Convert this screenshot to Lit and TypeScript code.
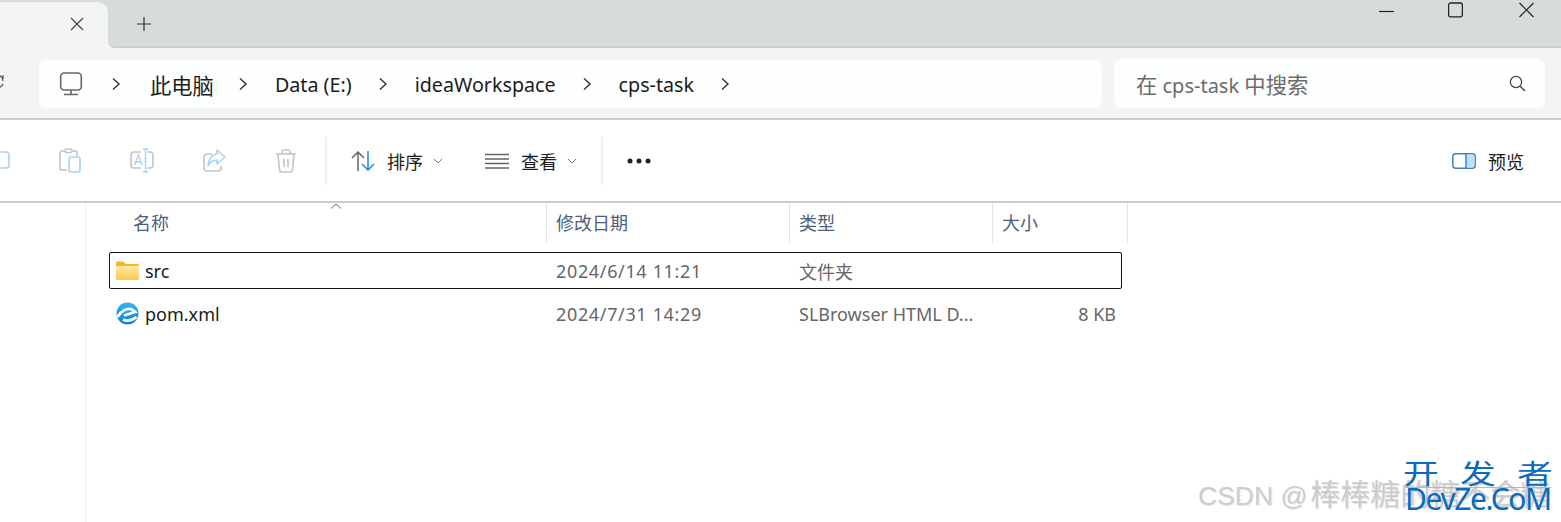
import { LitElement, html, css, svg } from 'lit';
import { customElement } from 'lit/decorators.js';

const crumbs = [
  { label: '此电脑', cjk: true },
  { label: 'Data (E:)', cjk: false },
  { label: 'ideaWorkspace', cjk: false },
  { label: 'cps-task', cjk: false },
];

const chevron = svg`<svg class="crumb-chev" width="10" height="14" viewBox="0 0 10 14"><path d="M2 1.5 8 7 2 12.5" fill="none" stroke="#333" stroke-width="1.4"/></svg>`;
const caret = svg`<svg class="caret" width="10" height="6" viewBox="0 0 10 6"><path d="M1 1 5 5 9 1" fill="none" stroke="#777" stroke-width="1"/></svg>`;

@customElement('app-root')
class AppRoot extends LitElement {
  static styles = css`
    :host {
      display: block;
      width: 1561px;
      height: 522px;
      overflow: hidden;
      position: relative;
      background: #fff;
      font-family: 'Noto Sans', 'Noto Sans CJK SC', sans-serif;
      color: #1c1c1c;
    }

    svg {
      display: block;
      flex: none;
    }

    .titlebar {
      height: 44px;
      padding-top: 2px;
      display: flex;
      background: #d7dcda;
      border-bottom: 2px solid #c9cfcc;
    }

    .tab {
      width: 108px;
      height: 46px;
      background: #f3f5f5;
      border-top-right-radius: 10px;
      display: flex;
      align-items: flex-start;
      justify-content: flex-end;
      padding: 15px 24px 0 0;
      box-sizing: border-box;
      position: relative;
      z-index: 1;
    }

    .tab::after {
      content: '';
      position: absolute;
      left: 100%;
      bottom: 0;
      width: 6px;
      height: 6px;
      background: radial-gradient(circle at 100% 0, transparent 5.5px, #f3f5f5 6px);
    }

    .plus {
      margin: 15px 0 0 29px;
    }

    .win {
      margin-left: auto;
      display: flex;
      align-items: flex-start;
      padding: 0 27px 0 0;
      gap: 54px;
    }

    .win .close {
      margin-left: 2px;
    }

    .nav {
      height: 70px;
      background: #f3f5f5;
      border-bottom: 2px solid #c8cecc;
      display: flex;
      align-items: flex-start;
    }

    .refresh {
      margin-top: 26px;
    }

    .address {
      margin: 12px 0 0 35px;
      width: 1063px;
      height: 48px;
      background: #fdfefe;
      border-radius: 7px;
      display: flex;
      align-items: center;
      padding-left: 20px;
      box-sizing: border-box;
      font-size: 19.7px;
    }

    .crumb-chev {
      margin: 0 27px 0 26px;
    }

    .crumb-chev.first {
      margin: 0 29px 0 28px;
    }

    .crumb {
      white-space: nowrap;
    }

    .crumb.cjk {
      margin-right: -2px;
    }

    .crumb.cjk,
    .search .cjk {
      font-size: 21.3px;
    }

    .search {
      margin: 11px 0 0 12px;
      width: 431px;
      height: 49px;
      background: #fdfefe;
      border-radius: 7px;
      display: flex;
      align-items: center;
      justify-content: space-between;
      padding: 0 19px 0 22px;
      box-sizing: border-box;
      font-size: 20px;
      color: #6b6b6b;
    }

    .toolbar {
      height: 81px;
      background: #fff;
      border-bottom: 2px solid #c8cecc;
      display: flex;
      align-items: center;
      margin-left: -38px;
      font-size: 18px;
    }

    .slot {
      width: 72px;
      display: flex;
      justify-content: center;
    }

    .slot.more {
      width: 71px;
    }

    .sep {
      width: 2px;
      height: 48px;
      background: #eeeeee;
      flex: none;
    }

    .sep.first {
      margin-left: 3px;
    }

    .tool {
      display: flex;
      align-items: center;
      white-space: nowrap;
    }

    .tool .label {
      margin: 0 10px 0 12px;
    }

    .sort {
      margin: 0 42px 0 24px;
    }

    .view {
      margin-right: 24px;
    }

    .preview {
      margin-left: 778px;
    }

    .main {
      margin-left: 85px;
      border-left: 1px solid #f0f0f0;
      height: 319px;
      font-size: 18px;
    }

    .header,
    .row {
      display: grid;
      margin-left: 23px;
    }

    .header {
      grid-template-columns: 438px 243px 203px 135px;
      height: 40px;
      align-items: center;
      color: #4c607a;
      margin-bottom: 9px;
      width: 1019px;
    }

    .header > div {
      height: 40px;
      line-height: 40px;
      padding-left: 9px;
      border-right: 1px solid #e5e5e5;
      box-sizing: border-box;
      position: relative;
    }

    .header > div:first-child {
      padding-left: 24px;
    }

    .sorted {
      position: absolute;
      left: 221px;
      top: 0;
    }

    .row {
      grid-template-columns: 437px 243px 203px 128px;
      height: 37px;
      width: 1013px;
      align-items: center;
      box-sizing: border-box;
      border: 1px solid transparent;
      color: #666;
      margin-bottom: 6px;
    }

    .row.selected {
      border-color: #111;
      border-radius: 2px;
    }

    .row > div {
      padding-left: 9px;
      white-space: nowrap;
    }

    .row > .name {
      display: flex;
      align-items: center;
      gap: 6px;
      padding-left: 6px;
      color: #1a1a1a;
    }

    .row > .date {
      letter-spacing: 0.65px;
    }

    .row > .size {
      padding: 0 5px 0 0;
      text-align: right;
    }

    .mark {
      position: absolute;
      left: 1198px;
      top: 476px;
      font: 26.5px/38px 'Liberation Sans', 'Noto Sans CJK SC', sans-serif;
      color: #cdcdcd;
      text-shadow: 1px 1px 1px #e6e6e6;
      white-space: nowrap;
    }

    .mark .cjk {
      font-size: 30px;
      margin-left: 3px;
    }

    .brand {
      position: absolute;
      left: 1405px;
      top: 453px;
      width: 146px;
      color: #0b6bbd;
      white-space: nowrap;
    }

    .brand .cn {
      display: flex;
      justify-content: space-between;
      font: 32px/34px 'Noto Sans CJK SC', sans-serif;
      border-bottom: 1px solid #8cc4e8;
      height: 34px;
    }

    .brand .cn span {
      display: block;
      transform: scale(1.12, 0.85);
      transform-origin: center bottom;
    }

    .brand .en {
      font: 30px/22px 'Noto Sans', sans-serif;
      letter-spacing: -1.4px;
    }
  `;

  protected render() {
    return html`
      <div class="titlebar">
        <div class="tab">
          <svg width="14" height="14" viewBox="0 0 14 14"><path d="M1 1 13 13M13 1 1 13" stroke="#444" stroke-width="1.2" fill="none"/></svg>
        </div>
        <svg class="plus" width="14" height="14" viewBox="0 0 14 14"><path d="M7 0V14M0 7H14" stroke="#333" stroke-width="1.2" fill="none"/></svg>
        <div class="win">
          <svg width="15" height="16" viewBox="0 0 15 16"><path d="M0 9.500H15" stroke="#222" stroke-width="1.2"/></svg>
          <svg width="15" height="16" viewBox="0 0 15 16"><rect x=".6" y="1" width="13.8" height="13.8" rx="2" fill="none" stroke="#222" stroke-width="1.3"/></svg>
          <svg class="close" width="15" height="16" viewBox="0 0 15 16"><path d="M.5 1 14.5 15M14.5 1 .5 15" stroke="#222" stroke-width="1.2" fill="none"/></svg>
        </div>
      </div>

      <div class="nav">
        <svg class="refresh" width="4" height="16" viewBox="0 0 4 16"><path d="M-3 2C0 1 3 3 3 7M3 1 3 5M-2 13C0 14 2 12 3 10" fill="none" stroke="#444" stroke-width="1.2"/></svg>
        <div class="address">
          <svg width="24" height="24" viewBox="0 0 24 24"><rect x="1.7" y="1" width="20.6" height="17" rx="3.5" fill="none" stroke="#666" stroke-width="1.6"/><path d="M12 18V22M5 22.5H19" stroke="#666" stroke-width="1.6" fill="none"/></svg>
          ${crumbs.map(
            (c, i) => html`
              ${i === 0
                ? svg`<svg class="crumb-chev first" width="10" height="14" viewBox="0 0 10 14"><path d="M2 1.5 8 7 2 12.5" fill="none" stroke="#333" stroke-width="1.4"/></svg>`
                : ''}
              <span class="crumb ${c.cjk ? 'cjk' : ''}">${c.label}</span>
              ${chevron}
            `,
          )}
        </div>
        <div class="search">
          <span><span class="cjk">在</span> cps-task <span class="cjk">中搜索</span></span>
          <svg width="17" height="17" viewBox="0 0 17 17"><circle cx="7" cy="7" r="5.6" fill="none" stroke="#444" stroke-width="1.2"/><path d="M11 11 16 16" stroke="#444" stroke-width="1.4"/></svg>
        </div>
      </div>

      <div class="toolbar">
        <div class="slot">
          <svg width="24" height="24" viewBox="0 0 24 24"><path d="M3 3H20A3 3 0 0 1 23 6V16A3 3 0 0 1 20 19H14" fill="none" stroke="#a9d2f3" stroke-width="1.6"/><path d="M6 19H14" stroke="#cfcfcf" stroke-width="1.6"/></svg>
        </div>
        <div class="slot">
          <svg width="22" height="25" viewBox="0 0 22 25"><path d="M8 22H3A2 2 0 0 1 1 20V5A2 2 0 0 1 3 3H16A2 2 0 0 1 18 5V8" fill="none" stroke="#c4c4c4" stroke-width="1.6"/><rect x="6" y="1" width="7" height="3.5" rx="1.5" fill="#fff" stroke="#c4c4c4" stroke-width="1.4"/><rect x="10" y="9" width="11" height="15" rx="2" fill="#fff" stroke="#a9d2f3" stroke-width="1.6"/></svg>
        </div>
        <div class="slot">
          <svg width="24" height="25" viewBox="0 0 24 25"><path d="M11 4H4A3 3 0 0 0 1 7V17A3 3 0 0 0 4 20H11M17 4H20A3 3 0 0 1 23 7V17A3 3 0 0 1 20 20H17" fill="none" stroke="#c4c4c4" stroke-width="1.6"/><path d="M4.5 17 8.500 7 12 17M6 14H11M13 1H18M15.500 1V24M13 24H18" fill="none" stroke="#a9d2f3" stroke-width="1.4"/></svg>
        </div>
        <div class="slot">
          <svg width="23" height="24" viewBox="0 0 23 24"><path d="M9 5H4A3 3 0 0 0 1 8V19A3 3 0 0 0 4 22H15A3 3 0 0 0 18 19V17" fill="none" stroke="#c4c4c4" stroke-width="1.6"/><path d="M14 1 22 8 14 15V11C10 11 7 13 5 17 5 11 9 5 14 5Z" fill="#fff" stroke="#a9d2f3" stroke-width="1.6" stroke-linejoin="round"/></svg>
        </div>
        <div class="slot">
          <svg width="22" height="24" viewBox="0 0 22 24"><path d="M1 5H21M7 5V3A2 2 0 0 1 9 1H13A2 2 0 0 1 15 3V5M3 5 4.500 20.500A2.500 2.500 0 0 0 7 23H15A2.500 2.500 0 0 0 17.500 20.500L19 5M9 10V18M13 10V18" fill="none" stroke="#c4c4c4" stroke-width="1.6"/></svg>
        </div>
        <div class="sep first"></div>
        <div class="tool sort">
          <svg width="24" height="20" viewBox="0 0 24 20"><path d="M7 20V1M1 7 7 1 13 7" fill="none" stroke="#666" stroke-width="1.5"/><path d="M17 0V19M11 13 17 19 23 13" fill="none" stroke="#1e8ae6" stroke-width="1.5"/></svg>
          <span class="label">排序</span>${caret}
        </div>
        <div class="tool view">
          <svg width="24" height="16" viewBox="0 0 24 16"><path d="M0 1.500H24M0 6H24M0 10.500H24M0 15H24" stroke="#666" stroke-width="1.300"/></svg>
          <span class="label">查看</span>${caret}
        </div>
        <div class="sep"></div>
        <div class="slot more">
          <svg width="24" height="6" viewBox="0 0 24 6"><circle cx="3" cy="3" r="2.500" fill="#222"/><circle cx="12" cy="3" r="2.500" fill="#222"/><circle cx="21" cy="3" r="2.500" fill="#222"/></svg>
        </div>
        <div class="tool preview">
          <svg width="24" height="16" viewBox="0 0 24 16"><rect x=".8" y=".8" width="22.400" height="14.400" rx="3" fill="none" stroke="#4a7ea8" stroke-width="1.500"/><rect x="14" y="1.500" width="8.500" height="13" rx="2" fill="#bfe0f7"/><path d="M14 1V15" stroke="#1e8ae6" stroke-width="1.500"/></svg>
          <span class="label">预览</span>
        </div>
      </div>

      <div class="main">
        <div class="header">
          <div>
            名称
            <svg class="sorted" width="12" height="6" viewBox="0 0 12 6"><path d="M1 5.500 6 1 11 5.500" fill="none" stroke="#666" stroke-width="1"/></svg>
          </div>
          <div>修改日期</div>
          <div>类型</div>
          <div>大小</div>
        </div>
        <div class="row selected">
          <div class="name">
            <svg width="23" height="19" viewBox="0 0 23 19"><defs><linearGradient id="fold" x1="0" y1="0" x2="0" y2="1"><stop offset="0" stop-color="#ffeaa6"/><stop offset="1" stop-color="#fbc94f"/></linearGradient></defs><path d="M0 2A1.500 1.500 0 0 1 1.500 .5H7L10 3H21.500A1.500 1.500 0 0 1 23 4.500V6H0Z" fill="#f8b81f"/><path d="M0 5H23V17.500A1.500 1.500 0 0 1 21.500 19H1.500A1.500 1.500 0 0 1 0 17.500Z" fill="url(#fold)"/></svg>
            <span>src</span>
          </div>
          <div class="date">2024/6/14 11:21</div>
          <div>文件夹</div>
          <div class="size"></div>
        </div>
        <div class="row">
          <div class="name">
            <svg width="23" height="23" viewBox="0 0 23 23"><defs><linearGradient id="edge" x1="0" y1="0" x2="0" y2="1"><stop offset="0" stop-color="#2cb8f6"/><stop offset="1" stop-color="#0c7edb"/></linearGradient></defs><circle cx="11.500" cy="11.500" r="11" fill="url(#edge)"/><path d="M1.500 15C5 9 11 5.500 16 7.500L19 10 8 13.500" fill="none" stroke="#fff" stroke-width="2.800"/><path d="M7 17.500C11 19.500 16 18.500 20.500 15" fill="none" stroke="#fff" stroke-width="2.800"/></svg>
            <span>pom.xml</span>
          </div>
          <div class="date">2024/7/31 14:29</div>
          <div>SLBrowser HTML D...</div>
          <div class="size">8 KB</div>
        </div>
      </div>

      <div class="mark">CSDN @<span class="cjk">棒棒糖的糖不会糖</span></div>
      <div class="brand">
        <div class="cn"><span>开</span><span>发</span><span>者</span></div>
        <div class="en">DevZe.CoM</div>
      </div>
    `;
  }
}
